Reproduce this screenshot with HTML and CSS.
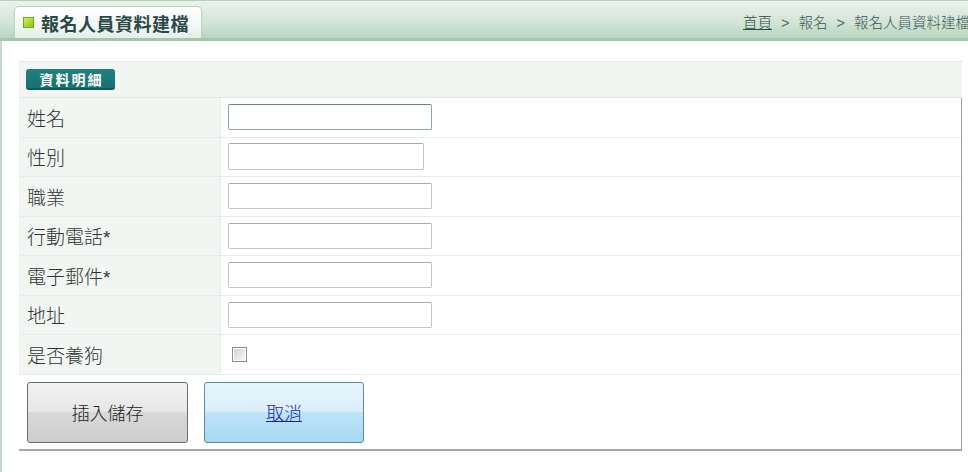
FILE: index.html
```html
<!DOCTYPE html>
<html lang="zh-Hant">
<head>
  <meta charset="UTF-8" />
  <title>報名人員資料建檔</title>
  <link rel="stylesheet" href="styles.css">
</head>
<body>

  <div class="topbar">
    <div class="tab">
      <span class="tab-icon"></span>
      <h1>報名人員資料建檔</h1>
    </div>
    <div class="crumbs">
      <a href="#">首頁</a><span class="sep">&gt;</span>報名<span class="sep">&gt;</span>報名人員資料建檔
    </div>
  </div>

  <div class="content">
    <div class="panel">
      <div class="panel-head"><span class="badge">資料明細</span></div>

      <div class="form">
        <div class="row">
          <div class="label">姓名</div>
          <div class="field"><input type="text" class="text focused"></div>
        </div>
        <div class="row">
          <div class="label">性別</div>
          <div class="field"><input type="text" class="text narrow"></div>
        </div>
        <div class="row">
          <div class="label">職業</div>
          <div class="field"><input type="text" class="text"></div>
        </div>
        <div class="row">
          <div class="label">行動電話*</div>
          <div class="field"><input type="text" class="text"></div>
        </div>
        <div class="row">
          <div class="label">電子郵件*</div>
          <div class="field"><input type="text" class="text"></div>
        </div>
        <div class="row">
          <div class="label">地址</div>
          <div class="field"><input type="text" class="text"></div>
        </div>
        <div class="row">
          <div class="label">是否養狗</div>
          <div class="field"><input type="checkbox" class="check"></div>
        </div>

        <!-- buttons -->
        <div class="actions">
          <button type="button" class="btn btn-save">插入儲存</button>
          <button type="button" class="btn btn-cancel"><a href="#">取消</a></button>
        </div>
      </div>
    </div>
  </div>

</body>
</html>
```

FILE: styles.css
```css
body {
  margin: 0;
  font-family: "Liberation Sans", "Noto Sans CJK TC", sans-serif;
  color: #333;
  background: #fff;
  overflow: hidden;
}

/* top bar */
.topbar {
  display: flex;
  align-items: flex-end;
  height: 37px;
  padding-left: 14px;
  border-top: 1px solid #b4d0ba;
  border-bottom: 3px solid #a2c7ab;
  background: linear-gradient(#eaf2ec, #d2e4d6 60%, #b7d5be);
  box-sizing: content-box;
  overflow: hidden;
  white-space: nowrap;
}
.tab {
  display: flex;
  align-items: center;
  gap: 7px;
  height: 31px;
  padding: 0 12px 0 8px;
  border: 1px solid #bcd4c1;
  border-bottom: none;
  border-radius: 5px 5px 0 0;
  background: linear-gradient(#ffffff, #f2f7f3 60%, #e4efe7);
}
.tab-icon {
  width: 9px;
  height: 9px;
  border: 1px solid #7aa51c;
  background: linear-gradient(135deg, #d2ee5a, #8fc21c);
}
.tab h1 {
  margin: 0;
  font-size: 18px;
  font-weight: 700;
  color: #2b4848;
  letter-spacing: 0.5px;
}
.crumbs {
  margin-left: auto;
  width: 225px;
  align-self: center;
  margin-top: 3px;
  font-size: 14.5px;
  font-weight: 300;
  color: #3d5757;
  overflow: hidden;
}
.crumbs a {
  color: #2f4a4a;
}
.crumbs .sep {
  margin: 0 9px;
  color: #556b6b;
}

/* content */
.content {
  height: calc(100vh - 41px);
  box-sizing: border-box;
  padding: 20px 0 0 17px;
  border-left: 2px solid #c6d8c8;
}
.panel {
  width: 943px;
}
.panel-head {
  display: flex;
  align-items: center;
  height: 35px;
  padding-left: 7px;
  background: #f1f6f3;
  border-top: 1px solid #e0e9e3;
  border-bottom: 1px solid #e0e8e3;
}
.badge {
  display: inline-flex;
  align-items: center;
  justify-content: center;
  width: 89px;
  height: 21px;
  box-sizing: border-box;
  border-radius: 3px;
  border-bottom: 2px solid #0f5a5a;
  background: linear-gradient(#23807f, #177171);
  color: #fff;
  font-size: 14px;
  font-weight: 700;
  letter-spacing: 2px;
  padding-left: 2px;
}

.form {
  border-right: 1px solid #9c9c9c;
  border-bottom: 2px solid #a6a6a6;
}
.row {
  display: flex;
  height: 39.5px;
  box-sizing: border-box;
  border-bottom: 1px solid #e7ecea;
}
.label {
  display: flex;
  align-items: center;
  width: 193px;
  padding-left: 8px;
  background: #f1f6f3;
  border-right: 1px solid #e6ece8;
  font-size: 19px;
  font-weight: 300;
  color: #333;
}
.field {
  display: flex;
  align-items: center;
  padding-left: 7px;
}
.text {
  width: 204px;
  height: 26px;
  box-sizing: border-box;
  margin: 0;
  border: 1px solid #c4c4c4;
  border-top-color: #a8a8a8;
  border-radius: 2px;
  background: #fff;
  outline: none;
}
.text.narrow {
  width: 196px;
  height: 27px;
}
.text.focused {
  border-color: #8aa6ab;
  border-top-color: #5f8589;
}
.check {
  appearance: none;
  width: 15px;
  height: 15px;
  margin: 0 0 0 4px;
  border: 1px solid #8c8c8c;
  box-shadow: inset 0 0 0 1px #fff;
  background: linear-gradient(135deg, #cfcfcf, #fbfbfb);
}

.actions {
  display: flex;
  gap: 16px;
  height: 74px;
  box-sizing: border-box;
  padding: 7px 0 0 8px;
}
.btn {
  width: 161px;
  height: 61px;
  border-radius: 3px;
  font-family: inherit;
  font-size: 18px;
  font-weight: 300;
  color: #222;
  cursor: pointer;
}
.btn-save {
  border: 1px solid #6e6e6e;
  background: linear-gradient(#f2f2f2, #e7e7e7 48%, #d9d9d9 50%, #cdcdcd);
}
.btn-cancel {
  width: 160px;
  border: 1px solid #5a8aa3;
  background: linear-gradient(#e7f5fd, #d9effb 48%, #bee4f8 50%, #a7d9f3);
}
.btn-cancel a {
  color: #1c1ca8;
}
```
